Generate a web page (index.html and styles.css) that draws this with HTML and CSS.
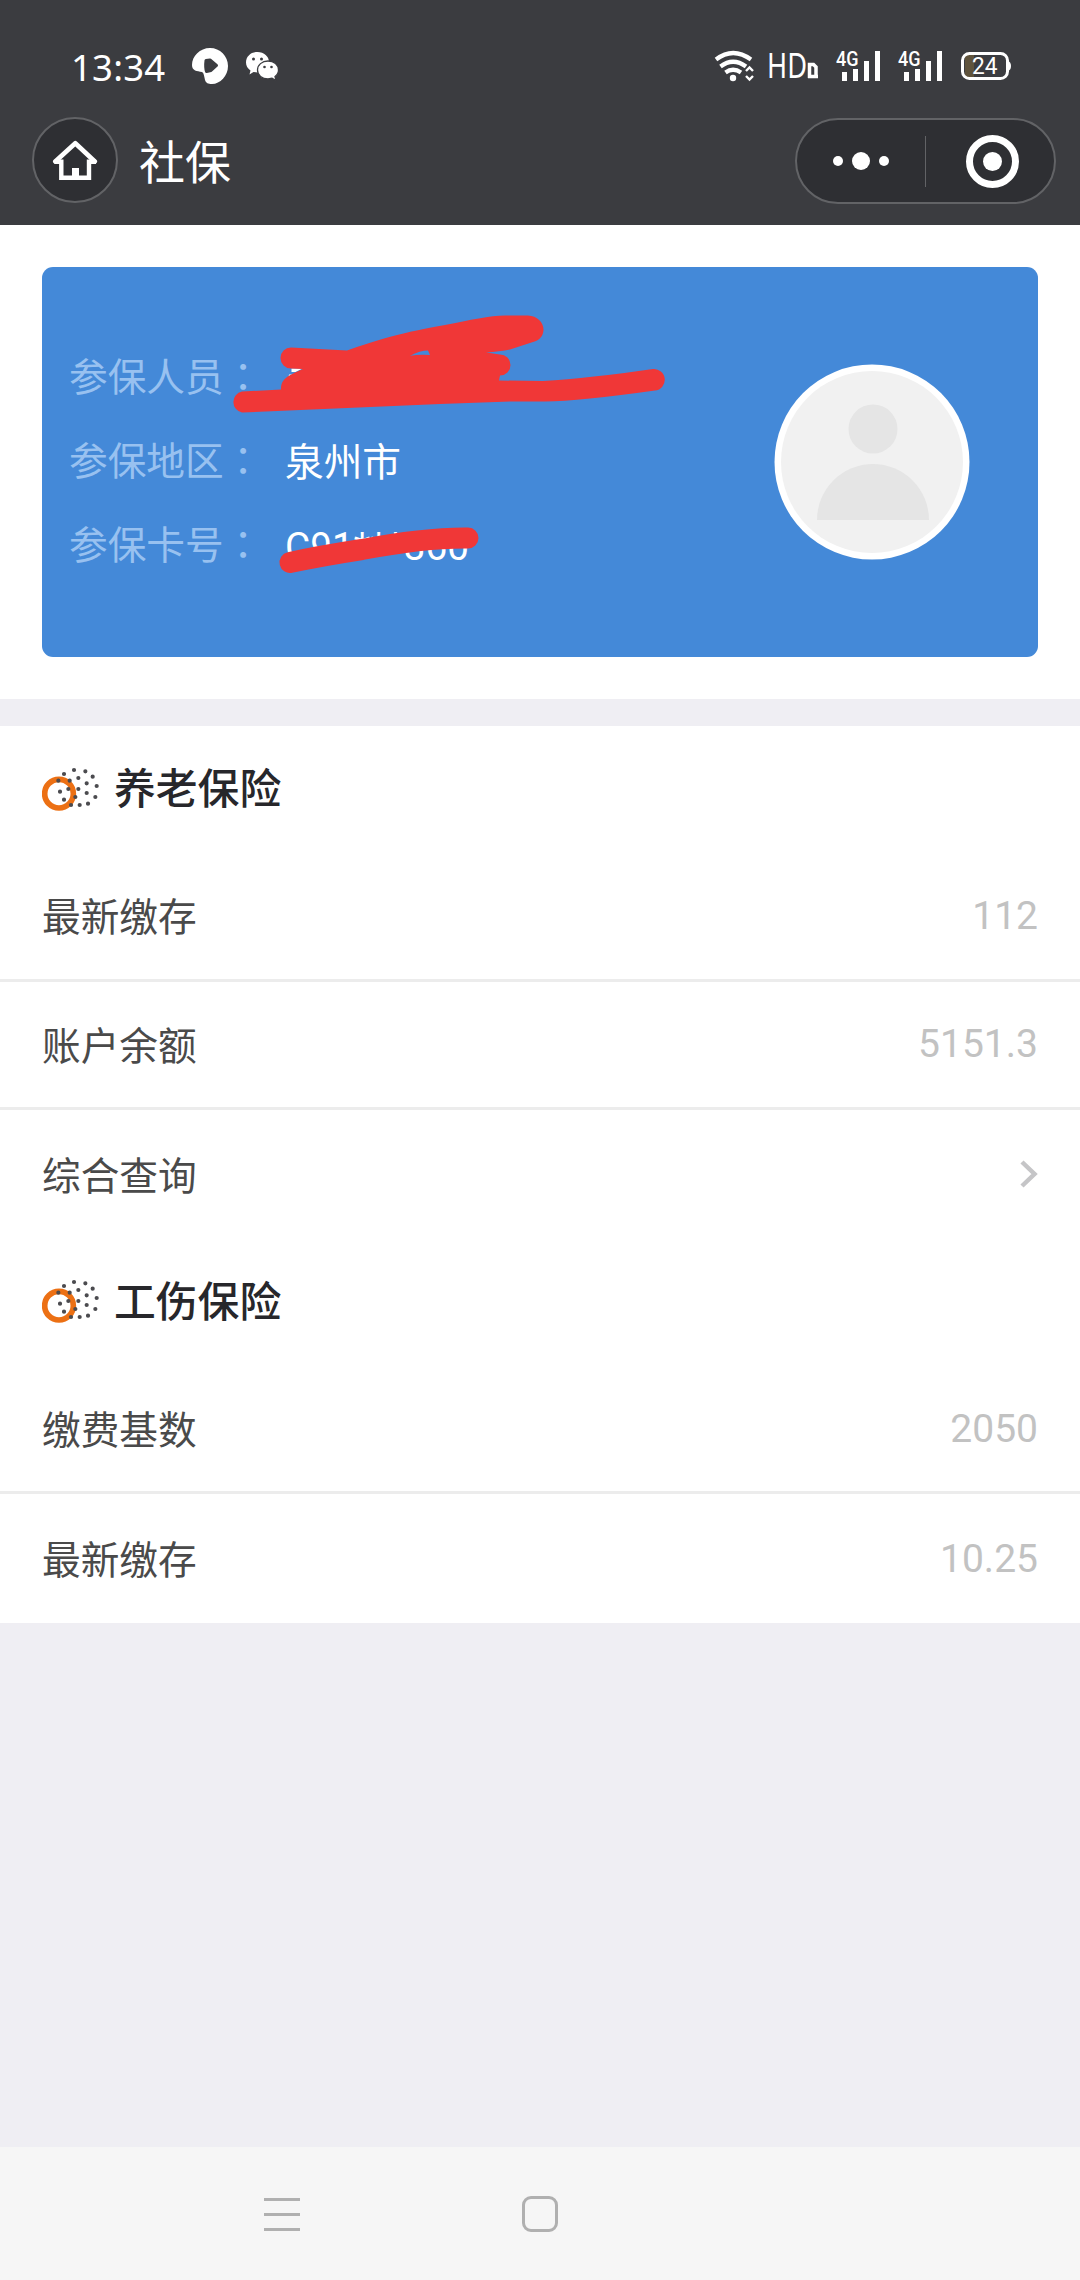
FILE: index.html
```html
<!DOCTYPE html>
<html lang="zh-CN">
<head>
<meta charset="utf-8">
<title>社保</title>
<link rel="stylesheet" href="styles.css">
</head>
<body>
<header class="top">
  <div class="status">
    <span class="clock">13:34</span>
    <svg class="status-app" width="36" height="36" viewBox="0 0 36 36"><path fill="#fff" d="M0 17C0 8 8 0 18 0s18 8 18 18-8 18-16 18c-4 0-6-1-7-4-1-4-1-7-3-8-5-1-10-1-10-7z"/><path fill="#3b3c40" stroke="#3b3c40" stroke-width="3" stroke-linejoin="round" d="M14 12.500l4-.5 6.500 5.500-5.500 5-4.500 1c-1-3-1-7-.5-11z"/></svg>
    <svg class="status-chat" width="33" height="29" viewBox="0 0 33 29"><path fill="#fff" d="M11.500 0C18 0 23 4.500 23 10c0 6-5 10.500-11.500 10.500l-4-.500-4 2.500 1-4C1.500 16.500 0 13.500 0 10.500 0 4.500 5 0 11.500 0z"/><path fill="#fff" stroke="#3b3c40" stroke-width="1.300" d="M22 9c6 0 10.500 4 10.500 9 0 3-1.500 5-3.500 6.500l1 4-4-2.200-4 .7c-6 0-10.500-4-10.500-9s4.500-9 10.500-9z"/><g fill="#3b3c40"><circle cx="7.500" cy="7" r="1.500"/><circle cx="15.500" cy="7" r="1.500"/><circle cx="18.500" cy="15" r="1.300"/><circle cx="25.500" cy="15" r="1.300"/></g></svg>
    <svg class="status-right" width="300" height="52" viewBox="714 40 300 52">
      <g fill="none" stroke="#fff" stroke-width="4.200">
        <path d="M716 59.500q17-13 35 0"/><path d="M720.500 66.500q12.500-9.500 25.500 0"/><path d="M725.500 72.500q7.500-5.500 15.500 0"/>
        <path stroke-width="2.400" d="M746 71l3.500-3.500L753 71M746 76l3.500 3.500L753 76"/>
      </g>
      <circle cx="733" cy="78" r="3.200" fill="#fff"/>
      <text class="hd" x="767" y="78" textLength="40" lengthAdjust="spacingAndGlyphs">HD</text>
      <path fill="none" stroke="#fff" stroke-width="3.500" d="M809.500 78V64.500h4l2.500 2.500V76.500M808 76.500h10"/>
      <text class="net" x="836" y="66" textLength="22.500" lengthAdjust="spacingAndGlyphs">4G</text>
      <path stroke="#fff" stroke-width="5" d="M844.500 81v-9M855.500 81V69M866.500 81V61M877.500 81V51"/>
      <text class="net" x="898" y="66" textLength="22.500" lengthAdjust="spacingAndGlyphs">4G</text>
      <path stroke="#fff" stroke-width="5" d="M906.500 81v-9M917.500 81V69M928.500 81V61M939.500 81V51"/>
      <path fill="#5f533c" d="M965 54h9v25h-9z"/>
      <rect x="962.500" y="53.500" width="45" height="25" rx="7" fill="none" stroke="#fff" stroke-width="3"/>
      <path fill="#fff" d="M1008 61q3 1 3 5t-3 5z"/>
      <text class="battery" x="972" y="73.500" textLength="25.500" lengthAdjust="spacingAndGlyphs">24</text>
    </svg>
  </div>
  <div class="titlebar">
    <span class="home"><svg width="46" height="42" viewBox="0 0 46 42"><path fill="none" stroke="#fff" stroke-width="4.600" stroke-linejoin="round" stroke-linecap="round" d="M3.300 22.500L23.300 4.200l19.500 18.300"/><path fill="none" stroke="#fff" stroke-width="4.400" d="M2.500 22.800H9.300V38.800H37V22.800h7"/><path fill="#fff" d="M20 29h7v10h-7z"/></svg></span>
    <h1 class="page-title">社保</h1>
    <div class="capsule">
      <span class="half"><i class="dot"></i><i class="dot big"></i><i class="dot"></i></span>
      <span class="divider"></span>
      <span class="half right"><i class="ring"><i class="core"></i></i></span>
    </div>
  </div>
</header>

<section class="hero">
  <div class="card">
    <dl class="info">
      <div class="info-row"><dt>参保人员<span class="colon" lang="zh-TW">：</span></dt><dd></dd></div>
      <div class="info-row"><dt>参保地区<span class="colon" lang="zh-TW">：</span></dt><dd>泉州市</dd></div>
      <div class="info-row"><dt>参保卡号<span class="colon" lang="zh-TW">：</span></dt><dd>C91***360</dd></div>
    </dl>
    <svg class="avatar" width="196" height="196" viewBox="0 0 196 196"><circle cx="98" cy="98" r="97.500" fill="#fff"/><circle cx="98" cy="98" r="91" fill="#f1f1f1"/><circle cx="99" cy="65" r="24.500" fill="#e5e5e5"/><path fill="#e5e5e5" d="M43 156a56 56 0 0 1 112 0z"/></svg>
    <svg class="scribble" width="996" height="390" viewBox="42 267 996 390">
      <path fill="#fff" d="M291.500 368.500h11l-7 3.500h-4zM289 374.500l3 0-1.500 3h-2z"/>
      <path fill="#f03737" fill-rule="evenodd" d="M291 347.500L347 350.500C375 341 390 335 445 325C470 320 490 315.500 505 315.500H528C537 316 543.500 322 543.500 330C543 336 540 340 533 342L510 349.500Q500 351.500 486 352.500L500 354.500A10.500 10.500 0 0 1 500 375.500L499 380.500L543 381Q590 378 653 369A10.700 10.700 0 0 1 655 390.500Q580 401 545 401.500L510 401.500L440 404L242 412.500A10.700 10.700 0 0 1 242 391.500L281 389.500C281 379 287 376 303 369L291 368.500A10.500 10.500 0 0 1 291 347.500zM410 355.800Q420 350.500 428 350.500L430 355Q420 354 410 355.800z"/>
      <path fill="none" stroke="#f03737" stroke-width="21" stroke-linecap="round" d="M290 562.500Q320 556 362 549.500Q425 537.500 468 538"/>
    </svg>
  </div>
</section>

<main>
  <section class="group">
    <h2 class="group-title"><svg width="58" height="46" viewBox="36 48 174 138"><use href="#brand"/></svg><span>养老保险</span></h2>
    <div class="row line"><span>最新缴存</span><b>112</b></div>
    <div class="row line"><span>账户余额</span><b>5151.3</b></div>
    <div class="row"><span>综合查询</span><svg width="19" height="30" viewBox="0 0 19 30"><path fill="none" stroke="#c5c5c7" stroke-width="4.500" d="M3 3l12.500 12L3 27"/></svg></div>
  </section>
  <section class="group">
    <h2 class="group-title"><svg width="58" height="46" viewBox="36 48 174 138"><g id="brand"><circle cx="87" cy="131" r="43" fill="none" stroke="#ec7014" stroke-width="17"/><path stroke="#4b4b4f" stroke-width="12.500" stroke-linecap="round" d="M102 72h.1M132 60h.1M166 64h.1M188 80h.1M200 108h.1M196 141h.1M174 161h.1M149 165h.1M123 165h.1M85 92h.1M119 92h.1M145 84h.1M170 100h.1M115 117h.1M145 117h.1M170 129h.1M90 125h.1M102 149h.1M136 141h.1"/></g></svg><span>工伤保险</span></h2>
    <div class="row line"><span>缴费基数</span><b>2050</b></div>
    <div class="row"><span>最新缴存</span><b>10.25</b></div>
  </section>
</main>

<nav class="sysnav">
  <span class="menu"><i></i><i></i><i></i></span>
  <span class="square"></span>
</nav>
</body>
</html>
```
FILE: styles.css
```css
* { box-sizing: border-box; margin: 0; padding: 0; }
body {
  width: 1080px;
  height: 2280px;
  display: flex;
  flex-direction: column;
  background: #efeef3;
  font-family: Roboto, "Noto Sans CJK SC", sans-serif;
  overflow: hidden;
}
svg { display: block; flex: none; }
i { display: block; }

.top { height: 225px; background: #3b3c40; color: #fff; padding-top: 40px; }
.status { height: 52px; display: flex; align-items: center; padding-left: 71px; }
.clock { width: 121px; font: 400 36.500px/52px "Noto Sans", sans-serif; letter-spacing: 0.2px; padding-top: 1px; }
.status-chat { margin-left: 18px; }
.status-right { margin-left: 435px; }
.status-right text { fill: #fff; font-family: Roboto, sans-serif; }
.status-right .hd { font-size: 34px; font-family: "Noto Sans", sans-serif; }
.net { font-size: 21px; font-weight: 500; }
.battery { font-size: 23px; }

.titlebar { display: flex; align-items: center; height: 86px; margin-top: 25px; padding: 0 24px 0 32px; }
.home {
  width: 86px; height: 86px; border-radius: 50%;
  border: 2px solid #626366; background: #2e2f33;
  display: flex; align-items: center; justify-content: center;
}
.page-title { flex: 1; margin-left: 21px; padding-top: 5px; font-size: 46px; line-height: 60px; font-weight: 400; }
.capsule {
  width: 261px; height: 86px; margin-top: 2px; border-radius: 43px;
  border: 2px solid #626366; background: #2e2f33;
  display: flex; align-items: center;
}
.half { width: 128px; display: flex; align-items: center; justify-content: center; gap: 9px; }
.half.right { width: 128px; padding-left: 5px; }
.divider { width: 1px; height: 51px; background: #626366; }
.dot { width: 10px; height: 10px; border-radius: 50%; background: #fff; }
.dot.big { width: 18px; height: 18px; }
.ring {
  width: 53px; height: 53px; border: 7px solid #fff; border-radius: 50%;
  display: flex; align-items: center; justify-content: center;
}
.core { width: 19px; height: 19px; border-radius: 50%; background: #fff; }

.hero { height: 474px; padding: 42px; background: #fff; }
.card {
  position: relative; height: 390px; border-radius: 11px; background: #4489d8;
  display: flex; justify-content: space-between; align-items: center;
  padding: 0 68px 0 27px;
}
.info { height: 252px; }
.info-row { display: flex; height: 84px; align-items: center; font-size: 38.700px; line-height: 56px; }
.info-row dt { width: 216px; color: #98c1f0; }
.colon { font-family: "Noto Sans CJK TC", sans-serif; line-height: 1; }
.info-row dd { color: #fff; padding-top: 1px; }
.scribble { position: absolute; left: 0; top: 0; }

main { flex: 1; padding-top: 27px; }
.group { background: #fff; }
.group-title {
  height: 127px; padding: 0 42px 2px; display: flex; align-items: center; gap: 14px;
  font-size: 41.800px; line-height: 60px; font-weight: 500; color: #27272b;
}
.group-title span { padding-top: 3px; }
.row {
  height: 128.600px; padding: 0 42px; display: flex; justify-content: space-between; align-items: center;
  font-size: 39px; line-height: 56px; color: #4a4a4a;
}
.row.line { border-bottom: 3px solid #ececec; }
.row span { font-size: 38.700px; padding-top: 5px; }
.row b { font-weight: 400; color: #c2c2c2; }

.sysnav { height: 133px; background: #f6f6f6; display: flex; align-items: center; padding: 1px 0 0 264px; gap: 222px; }
.menu { width: 36px; display: grid; gap: 12px; }
.menu i { height: 3px; background: #b0b0b0; }
.square { width: 36px; height: 36px; border: 3px solid #b0b0b0; border-radius: 9px; }
```
